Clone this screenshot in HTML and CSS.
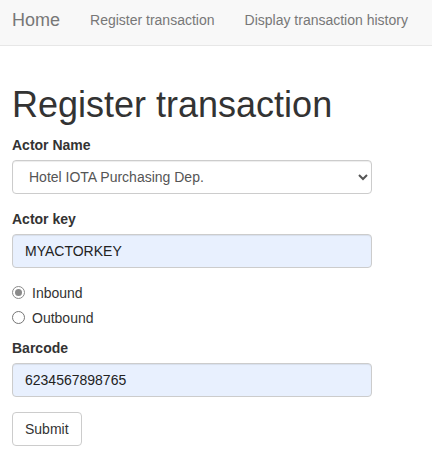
FILE: index.html
```html
<!DOCTYPE html>
<html lang="en">
<head>
<meta charset="utf-8">
<title>Register transaction</title>
<link rel="stylesheet" href="styles.css">
</head>
<body>
<nav class="navbar">
  <a class="brand" href="#">Home</a>
  <a class="nav-link" href="#">Register transaction</a>
  <a class="nav-link" href="#">Display transaction history</a>
</nav>
<main class="container">
  <h1 class="title">Register transaction</h1>
  <form class="form">
    <div class="form-group">
      <label class="label" for="actor">Actor Name</label>
      <select id="actor" class="control select">
        <option>Hotel IOTA Purchasing Dep.</option>
      </select>
    </div>
    <div class="form-group">
      <label class="label" for="key">Actor key</label>
      <input id="key" class="control filled" type="text" value="MYACTORKEY">
    </div>
    <div class="radios">
      <label class="radio"><input class="radio-input" type="radio" name="dir" checked><span>Inbound</span></label>
      <label class="radio"><input class="radio-input" type="radio" name="dir"><span>Outbound</span></label>
    </div>
    <div class="form-group">
      <label class="label" for="barcode">Barcode</label>
      <input id="barcode" class="control filled" type="text" value="6234567898765">
    </div>
    <button class="btn" type="button">Submit</button>
  </form>
</main>
</body>
</html>
```
FILE: styles.css
```css
* { box-sizing: border-box; }
html, body { margin: 0; padding: 0; background: #fff; }
body {
  font-family: "Liberation Sans", Arial, sans-serif;
  font-size: 14px;
  line-height: 20px;
  color: #333;
}
.navbar {
  height: 46px;
  background: #f8f8f8;
  border-bottom: 1px solid #e7e7e7;
  display: flex;
  align-items: center;
  gap: 30px;
  padding: 0 12px 6px;
}
.navbar a { text-decoration: none; color: #777; }
.brand { font-size: 18px; line-height: 20px; }
.nav-link { font-size: 14px; line-height: 20px; }
.container { padding: 0 12px; width: 384px; }
.title {
  font-size: 36px;
  font-weight: 400;
  line-height: 1.1;
  margin: 39px 0 10px;
  color: #333;
}
.form { display: flex; flex-direction: column; align-items: flex-start; }
.form-group { display: flex; flex-direction: column; margin-bottom: 15px; width: 360px; }
.label { font-weight: bold; margin-bottom: 5px; display: block; }
.control {
  height: 34px;
  width: 360px;
  padding: 6px 12px;
  font-family: inherit;
  font-size: 14px;
  line-height: 20px;
  color: #555;
  background: #fff;
  border: 1px solid #ccc;
  border-radius: 4px;
  box-shadow: inset 0 1px 1px rgba(0,0,0,.075);
}
.control.filled { background: #e8f0fe; color: #222; }
.select { color: #555; }
.radios { display: flex; flex-direction: column; gap: 5px; margin-bottom: 10px; }
.radio { display: flex; align-items: center; gap: 7px; height: 20px; cursor: pointer; }
.radio-input {
  appearance: none;
  -webkit-appearance: none;
  margin: 0;
  width: 13px;
  height: 13px;
  border: 1px solid #767676;
  border-radius: 50%;
  background: #fff;
  display: grid;
  place-content: center;
}
.radio-input:checked { border-color: #8a8a8a; }
.radio-input:checked::before {
  content: "";
  width: 7px;
  height: 7px;
  border-radius: 50%;
  background: #8a8a8a;
}
.btn {
  height: 34px;
  padding: 6px 12px;
  font-family: inherit;
  font-size: 14px;
  line-height: 20px;
  color: #333;
  background: #fff;
  border: 1px solid #ccc;
  border-radius: 4px;
}
```
